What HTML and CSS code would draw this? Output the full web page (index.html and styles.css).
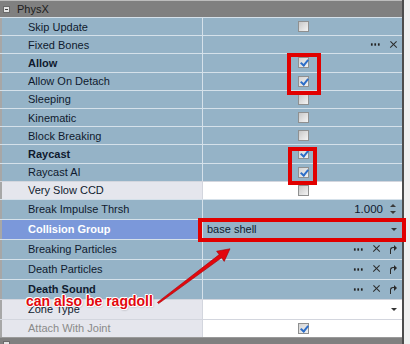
FILE: index.html
```html
<!DOCTYPE html>
<html lang="en">
<head>
<meta charset="UTF-8">
<title>PhysX properties</title>
<link rel="stylesheet" href="styles.css">
</head>
<body>
	<div class="grid">
		<div class="cat"><span class="toggle"></span>PhysX</div>

		<div class="row"><div class="name">Skip Update</div><div class="val mid"><span class="chk"></span></div></div>
		<div class="row"><div class="name">Fixed Bones</div><div class="val end"><span class="btn dots"></span><span class="btn x"></span></div></div>
		<div class="row"><div class="name bold">Allow</div><div class="val mid"><span class="chk on"></span></div></div>
		<div class="row"><div class="name">Allow On Detach</div><div class="val mid"><span class="chk on"></span></div></div>
		<div class="row"><div class="name">Sleeping</div><div class="val mid"><span class="chk"></span></div></div>
		<div class="row"><div class="name">Kinematic</div><div class="val mid"><span class="chk"></span></div></div>
		<div class="row"><div class="name">Block Breaking</div><div class="val mid"><span class="chk"></span></div></div>
		<div class="row"><div class="name bold">Raycast</div><div class="val mid"><span class="chk on"></span></div></div>
		<div class="row"><div class="name">Raycast AI</div><div class="val mid"><span class="chk on"></span></div></div>
		<div class="row light"><div class="name">Very Slow CCD</div><div class="val mid"><span class="chk"></span></div></div>

		<div class="row tall"><div class="name">Break Impulse Thrsh</div><div class="val end"><span class="num">1.000</span><span class="spin"><i class="up"></i><i class="down"></i></span></div></div>
		<div class="row tall sel"><div class="name bold">Collision Group</div><div class="val combo"><span class="txt">base shell</span><span class="drop"></span></div></div>
		<div class="row tall"><div class="name">Breaking Particles</div><div class="val end"><span class="btn dots"></span><span class="btn x"></span><span class="btn redo"></span></div></div>
		<div class="row tall"><div class="name">Death Particles</div><div class="val end"><span class="btn dots"></span><span class="btn x"></span><span class="btn redo"></span></div></div>
		<div class="row tall"><div class="name bold">Death Sound</div><div class="val end"><span class="btn dots"></span><span class="btn x"></span><span class="btn redo"></span></div></div>
		<div class="row tall light"><div class="name">Zone Type</div><div class="val combo plain"><span class="txt"></span><span class="drop"></span></div></div>
		<div class="row short light off"><div class="name">Attach With Joint</div><div class="val mid"><span class="chk on"></span></div></div>

		<div class="cat cat-last"><span class="toggle"></span></div>
	</div>

	<!-- annotations drawn over the grid -->
	<div class="mark mark-allow"></div>
	<div class="mark mark-ray"></div>
	<div class="mark mark-coll"></div>
	<svg class="arrow" width="410" height="344" viewBox="0 0 410 344">
		<polygon points="157.4,302.4 219.2,254.6 216.6,251.2 230,248.8 224.2,261.4 221.6,257.8 158.6,303.6" fill="#e3070d" stroke="#a50005" stroke-width="0.6" stroke-linejoin="round"/>
	</svg>
	<div class="note">can also be ragdoll</div>
</body>
</html>
```

FILE: styles.css
```css
html, body {
	margin: 0;
	padding: 0;
	height: 100%;
	overflow: hidden;
	background: #f0f0f0;
}
body {
	position: relative;
	font-family: "Liberation Sans", Arial, sans-serif;
	font-size: 11px;
	color: #0f1a2e;
}
.grid {
	width: 402px;
	border-right: 2px solid #4c4c4c;
}
.cat {
	height: 17px;
	box-sizing: border-box;
	border-top: 1px solid #bdbdbd;
	background: #808080;
	color: #1c1c1c;
	display: flex;
	align-items: center;
	padding-left: 3px;
}
.cat-last {
	border-top-color: #9a9a9a;
	align-items: flex-start;
	padding-top: 3px;
}
.toggle {
	position: relative;
	width: 7px;
	height: 7px;
	box-sizing: border-box;
	border: 1px solid #6a6a6a;
	background: #e4e4e4;
	margin-right: 7px;
}
.toggle:after {
	content: "";
	position: absolute;
	left: 1px;
	top: 2px;
	width: 3px;
	height: 1px;
	background: #404040;
}
.row {
	height: 18.2px;
	box-sizing: border-box;
	border-top: 1px solid #d5e1ea;
	display: flex;
	background: #95b3c7;
}
.row.tall {
	height: 20px;
}
.row.short {
	height: 18px;
}
.name {
	border-left: 2px solid #a7a7a7;
	border-right: 1px solid #d5e1ea;
	padding-left: 26px;
	box-sizing: border-box;
	width: 203px;
	display: flex;
	align-items: center;
	white-space: nowrap;
}
.bold {
	font-weight: bold;
}
.val {
	flex: 1;
	display: flex;
	align-items: center;
}
.val.mid {
	justify-content: center;
}
.val.end {
	justify-content: flex-end;
	padding-right: 4px;
}
.row.light {
	border-top-color: #d3d6de;
}
.row.light .name {
	background: #e5e6ed;
	border-right-color: #d3d6de;
}
.row.light .val {
	background: #fff;
}
.row.off .name {
	color: #8a8a8a;
}
.row.sel .name {
	background: #7b98da;
	color: #fff;
}
.chk {
	position: relative;
	width: 11px;
	height: 11px;
	box-sizing: border-box;
	border: 1px solid #8f9090;
	background: linear-gradient(135deg, #c8c8c8, #f4f4f4);
	margin-left: 1px;
}
.chk.on {
	background: linear-gradient(135deg, #d4d4d4, #f2f2f2);
}
.chk.on:after {
	content: "";
	position: absolute;
	left: 3px;
	top: 0;
	width: 3px;
	height: 6px;
	border: solid #2d6ec8;
	border-width: 0 2px 2px 0;
	transform: rotate(40deg);
}
.btn {
	position: relative;
	width: 10px;
	height: 10px;
	margin-left: 8px;
}
.dots {
	background: radial-gradient(circle, #222 0 1px, transparent 1.3px) 0 50% / 3.5px 3px repeat-x;
}
.x:before, .x:after {
	content: "";
	position: absolute;
	left: 1px;
	top: 4px;
	width: 9px;
	height: 1.3px;
	background: #2a2a2a;
	transform: rotate(45deg);
}
.x:after {
	transform: rotate(-45deg);
}
.redo {
	width: 9px;
}
.redo:before {
	content: "";
	position: absolute;
	left: 1px;
	top: 3px;
	width: 5px;
	height: 6px;
	border: solid #2a2a2a;
	border-width: 1px 0 0 1px;
	border-top-left-radius: 3px;
}
.redo:after {
	content: "";
	position: absolute;
	left: 5px;
	top: 1px;
	border: 3px solid transparent;
	border-left: 3px solid #2a2a2a;
	border-right: 0;
}
.num {
	margin-right: 7px;
	font-size: 11.5px;
}
.spin {
	display: flex;
	flex-direction: column;
	gap: 4px;
	margin-right: 2px;
}
.spin i {
	display: block;
	border: 3px solid transparent;
	border-top: 0;
	border-bottom: 3px solid #3a3a3a;
}
.spin i.down {
	border-bottom: 0;
	border-top: 3px solid #3a3a3a;
}
.combo {
	justify-content: space-between;
	padding: 0 5px 0 4px;
	box-shadow: inset 0 1px 0 #5a6670;
}
.combo.plain {
	box-shadow: none;
}
.drop {
	border: 3px solid transparent;
	border-bottom: 0;
	border-top: 3px solid #333;
}
.mark {
	position: absolute;
	box-sizing: border-box;
	border: 4px solid #e10000;
}
.mark-allow {
	left: 287px;
	top: 53px;
	width: 34px;
	height: 42px;
}
.mark-ray {
	left: 288px;
	top: 147px;
	width: 29px;
	height: 38px;
}
.mark-coll {
	left: 198px;
	top: 218px;
	width: 208px;
	height: 24px;
}
.arrow {
	position: absolute;
	left: 0;
	top: 0;
}
.note {
	position: absolute;
	left: 26px;
	top: 293px;
	font-size: 14px;
	line-height: 16px;
	font-weight: bold;
	color: #e3070d;
	text-shadow: 1px 0 #fff, -1px 0 #fff, 0 1px #fff, 0 -1px #fff, 1px 1px #fff, -1px -1px #fff, 1px 1px 2px rgba(0, 0, 0, 0.4);
	white-space: nowrap;
}
```
